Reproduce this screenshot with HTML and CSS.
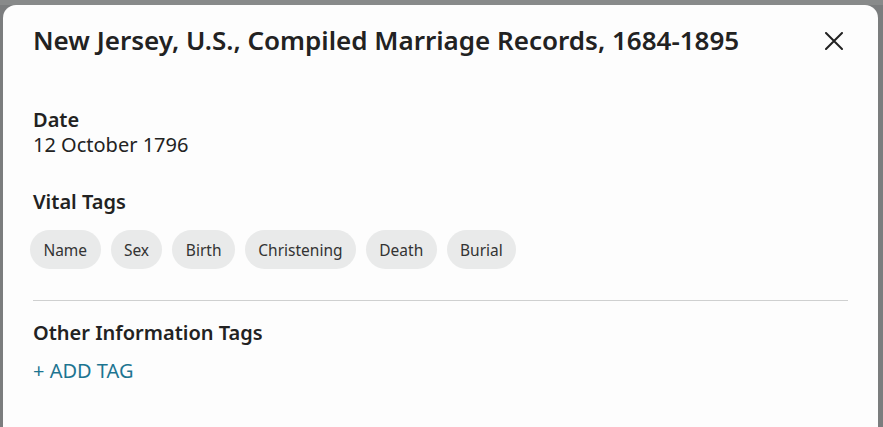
FILE: index.html
```html
<!DOCTYPE html>
<html>
<head>
<meta charset="utf-8">
<link rel="stylesheet" href="styles.css">
</head>
<body>
<div class="backdrop">
  <div class="modal">
    <div class="header">
      <h1 class="title">New Jersey, U.S., Compiled Marriage Records, 1684-1895</h1>
      <button class="close" aria-label="Close">
        <svg width="18" height="18" viewBox="0 0 18 18"><path d="M1 1 L17 17 M17 1 L1 17" stroke="#222" stroke-width="2" stroke-linecap="round"/></svg>
      </button>
    </div>
    <section class="field date">
      <h2 class="label">Date</h2>
      <div class="value">12 October 1796</div>
    </section>
    <section class="field vital">
      <h2 class="label">Vital Tags</h2>
      <div class="chips">
        <span class="chip">Name</span>
        <span class="chip">Sex</span>
        <span class="chip">Birth</span>
        <span class="chip">Christening</span>
        <span class="chip">Death</span>
        <span class="chip">Burial</span>
      </div>
    </section>
    <hr class="divider">
    <section class="field other">
      <h2 class="label">Other Information Tags</h2>
      <a class="add" href="#">+ ADD TAG</a>
    </section>
  </div>
</div>
</body>
</html>
```
FILE: styles.css
```css
html, body {
  margin: 0;
  padding: 0;
  height: 100%;
}
body {
  background: #7b7d7e;
  font-family: "Noto Sans", "Open Sans", sans-serif;
  color: #222;
  overflow: hidden;
}
.backdrop {
  padding: 5px 5px 0 3px;
  height: 100%;
  box-sizing: border-box;
  background: linear-gradient(#888a8a 0, #888a8a 5px, #7b7d7e 5px);
}
.modal {
  background: #fdfdfd;
  border-radius: 13px 13px 0 0;
  height: 100%;
  box-sizing: border-box;
  padding: 19px 30px 0 30px;
}
.header {
  display: flex;
  align-items: center;
  justify-content: space-between;
}
.title {
  margin: 0;
  font-size: 26px;
  font-weight: 600;
  line-height: 32px;
  color: #222;
}
.close {
  border: 0;
  background: none;
  padding: 0;
  width: 18px;
  height: 18px;
  margin: 2px 5px 0 0;
  display: flex;
}
.label {
  margin: 0;
  font-size: 20px;
  font-weight: 600;
  line-height: 25px;
  color: #222;
}
.value {
  font-size: 20px;
  line-height: 25px;
  color: #222;
}
.date {
  margin-top: 51px;
}
.vital {
  margin-top: 32px;
}
.chips {
  display: flex;
  gap: 10px;
  margin: 16px 0 0 -3px;
}
.chip {
  background: #e9eaea;
  border-radius: 20px;
  height: 39px;
  padding: 0 13.4px;
  display: flex;
  align-items: center;
  font-size: 15.5px;
  color: #333;
}
.divider {
  border: 0;
  border-top: 1px solid #cfd0d0;
  margin: 31px 0 0;
}
.other {
  margin-top: 19px;
}
.add {
  display: inline-block;
  margin-top: 13px;
  font-size: 20px;
  line-height: 25px;
  color: #1d7591;
  text-decoration: none;
}
```
